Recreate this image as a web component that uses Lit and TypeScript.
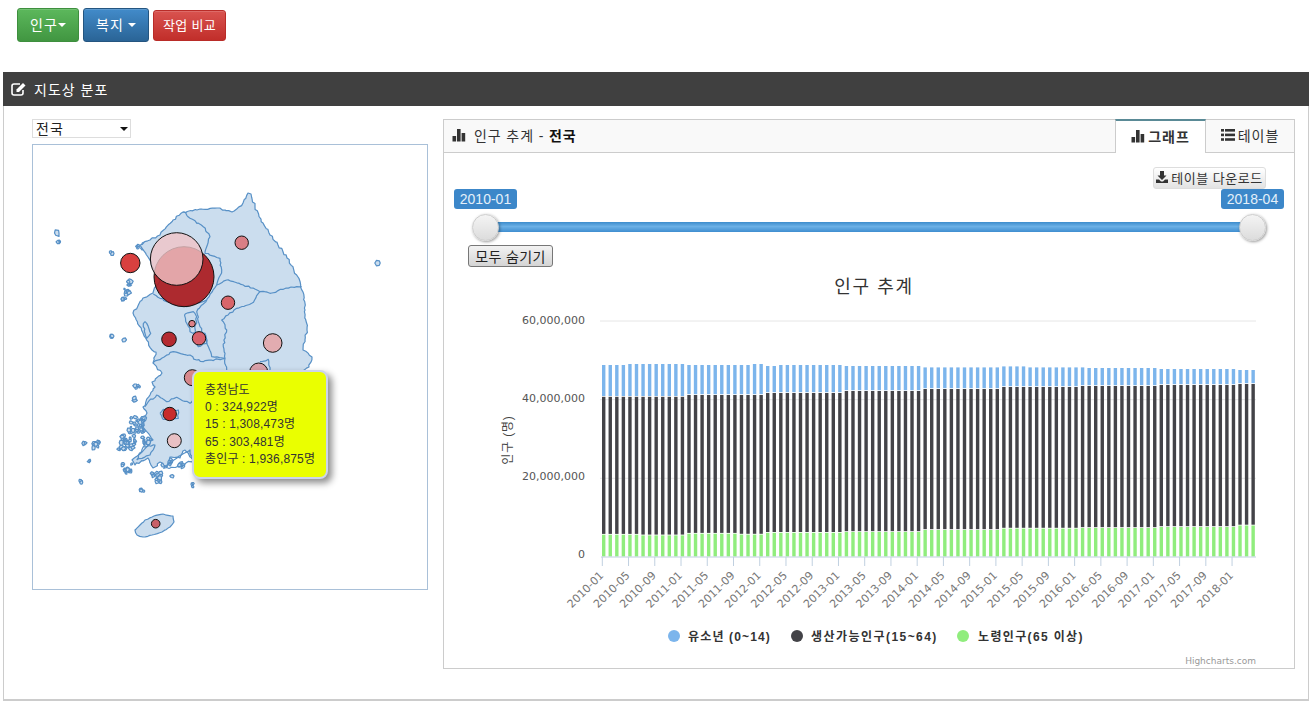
import { LitElement, html, css, svg } from "lit";
import { customElement } from "lit/decorators.js";

type P = [number, number];
let seed = 7;
const rnd = () => {
  seed = (seed * 16807) % 2147483647;
  return seed / 2147483647;
};
function rough(pts: P[], amp: number, close = false): string {
  const list = close ? [...pts, pts[0]] : pts;
  let d = `M${list[0][0].toFixed(1)} ${list[0][1].toFixed(1)}`;
  for (let i = 1; i < list.length; i++) {
    const [ax, ay] = list[i - 1];
    const [bx, by] = list[i];
    const n = Math.max(1, Math.round(Math.hypot(bx - ax, by - ay) / 2.6));
    for (let k = 1; k <= n; k++) {
      const t = k / n;
      const j = k === n ? 0 : amp;
      d += `L${(ax + (bx - ax) * t + (rnd() - 0.5) * j).toFixed(1)} ${(ay + (by - ay) * t + (rnd() - 0.5) * j).toFixed(1)}`;
    }
  }
  return d + (close ? "Z" : "");
}
const z2 = (a: number[][]): P[] => a.map(([x, y]) => [30 + x / 3, 170 + y / 3]);
const z3 = (a: number[][]): P[] => a.map(([x, y]) => [30 + x / 3, 360 + y / 3]);

const mainland: P[] = [
  [248, 193], [251, 194], [255, 207], [263, 223], [270, 235], [278, 245], [287, 258], [298, 277], [303, 292], [305, 310],
  [307, 330], [303, 350], [312, 357], [309, 367], [300, 372], [298, 400], [290, 430], [270, 452], [240, 465],
  [215, 460], [195, 462], [185, 450], [180, 458], [170, 457], [167, 467], [160, 462], [153, 468], [148, 458], [135, 465],
  [132, 460], [142, 452], [150, 444], [153, 440], [143, 427], [147, 413], [143, 407], [150, 395], [155, 387], [152, 382],
  [162, 373], [153, 363], [156, 352], [152, 350], [143, 333], [133, 313], [143, 298], [153, 293], [160, 280], [155, 273],
  [148, 257], [140, 245], [150, 240], [160, 235], [173, 220], [183, 212], [200, 209], [217, 208], [232, 212], [243, 203],
];
const borders: P[][] = [
  z2([[460, 125], [480, 145], [520, 170], [540, 200], [530, 230], [525, 250], [570, 265], [575, 300], [560, 345]]),
  z2([[560, 345], [590, 330], [640, 345], [690, 365], [720, 370], [760, 358], [800, 350], [815, 350]]),
  z2([[690, 365], [665, 400], [620, 415], [575, 450], [590, 480], [580, 530], [585, 565], [590, 600]]),
  z2([[370, 372], [410, 395], [470, 410], [530, 390], [560, 345]]),
  z2([[530, 390], [500, 425], [510, 470], [530, 510], [545, 560], [585, 565]]),
  z2([[465, 432], [490, 425], [500, 440], [495, 490], [480, 485], [470, 460], [465, 432]]),
  z2([[490, 490], [525, 490], [530, 520], [505, 530], [490, 510], [490, 490]]),
  z2([[370, 578], [395, 565], [430, 545], [480, 555], [500, 570], [520, 575], [585, 565]]),
  z2([[345, 455], [362, 490], [350, 505], [340, 470], [345, 455]]),
  z3([[345, 140], [355, 125], [380, 105], [410, 125], [440, 112], [480, 130], [490, 120]]),
  z3([[390, 160], [400, 148], [445, 150], [445, 175], [400, 178], [390, 160]]),
  z3([[320, 300], [360, 285], [375, 255], [340, 260], [320, 300]]),
  z3([[400, 325], [440, 295], [480, 270], [490, 300], [450, 320], [400, 325]]),
  z2([[690, 575], [715, 568], [720, 600]]),
];
const jeju: P[] = [[135, 530], [140, 525], [145, 520], [154, 516], [163, 514], [173, 516], [174, 522], [170, 527], [162, 532], [152, 535], [143, 537], [137, 535]];
const blobs: [number, number, number, number][] = [
  [57, 233, 3.4, 1], [59, 241, 1.5, 2], [111, 253, 1.3, 2], [378, 263, 3.5, 1], [140, 247, 4, 5], [130, 283, 2.5, 6], [127, 291, 2.5, 8],
  [124, 300, 1.5, 4], [137, 425, 8, 34], [128, 442, 7, 28], [148, 443, 6, 18], [127, 468, 5, 14], [157, 477, 5, 14], [167, 463, 4, 10],
  [96, 445, 3, 8], [84, 443, 1.5, 2], [89, 461, 1.5, 3], [80, 482, 1.5, 2], [142, 490, 2, 3], [172, 476, 2, 1], [193, 485, 2, 3], [180, 465, 3, 6], [118, 448, 2, 2],
  [137, 385, 3, 4], [111, 336, 1, 2], [125, 340, 1.5, 2], [132, 398, 3, 3],
];
function tiny(cx: number, cy: number, r: number): string {
  const n = 6;
  const pts: P[] = [];
  for (let i = 0; i < n; i++) {
    const a = (i / n) * Math.PI * 2;
    const q = r * (0.6 + rnd() * 0.6);
    pts.push([cx + Math.cos(a) * q, cy + Math.sin(a) * q]);
  }
  return "M" + pts.map((p) => p[0].toFixed(1) + " " + p[1].toFixed(1)).join("L") + "Z";
}
const islandPaths: string[] = [];
for (const [x, y, spread, n] of blobs) {
  for (let i = 0; i < n; i++) {
    const dx = n === 1 ? 0 : (rnd() - 0.5) * spread * 2;
    const dy = n === 1 ? 0 : (rnd() - 0.5) * spread * 2;
    islandPaths.push(tiny(x + dx, y + dy, n === 1 ? spread : 0.8 + rnd() * 1.8));
  }
}
const mainD = rough(mainland, 2, true);
const jejuD = rough(jeju, 0.8, true);
const borderDs = borders.map((b) => rough(b, 1.8));

const bubbles = [
  { x: 184, y: 276.7, r: 30, f: "rgba(170,28,32,.93)" },
  { x: 176.7, y: 259, r: 26.3, f: "rgba(240,196,199,.8)" },
  { x: 130.3, y: 263, r: 9.7, f: "#d9403f" },
  { x: 241.7, y: 242.7, r: 6.7, f: "#d97f86" },
  { x: 228, y: 302.7, r: 6.7, f: "#d8656a" },
  { x: 192, y: 323.7, r: 3.3, f: "#de8086" },
  { x: 199, y: 338.3, r: 6.7, f: "#d8606a" },
  { x: 169, y: 339.3, r: 7.3, f: "#b42a30" },
  { x: 272.7, y: 343, r: 9.3, f: "#e2acb0" },
  { x: 258.7, y: 372, r: 9, f: "#d9a0a8" },
  { x: 192.3, y: 377.7, r: 8, f: "#d8888c" },
  { x: 169.7, y: 414, r: 6.7, f: "#c82c2c" },
  { x: 174.3, y: 440.7, r: 7, f: "#e8c0c4" },
  { x: 155.7, y: 523.7, r: 4.3, f: "#c86068" },
];

const step = (i: number, t: [number, number][]) => {
  let v = t[0][1];
  for (const [s, y] of t) if (i >= s) v = y;
  return v;
};
const blueT: [number, number][] = [[0, 365], [4, 364], [13, 365], [23, 364], [25, 366], [27, 365], [37, 366], [49, 367.4], [61, 366.4], [65, 367.4], [74, 368], [85, 369], [97, 370]];
const blackT: [number, number][] = [[0, 396.8], [13, 395], [25, 393], [37, 391], [49, 389], [61, 387], [73, 386], [85, 385], [97, 384]];
const greenT: [number, number][] = [[0, 534.7], [6, 535.4], [13, 533.7], [21, 534.6], [25, 532.8], [37, 532], [49, 530], [61, 528.6], [73, 528], [85, 527], [97, 525.5]];

const labels: string[] = [];
for (let i = 0; i < 25; i++) {
  const m = i * 4;
  labels.push(`${2010 + Math.floor(m / 12)}-${String((m % 12) + 1).padStart(2, "0")}`);
}

const iconBars = html`<svg class="ico" viewBox="0 0 14 14" width="14" height="14"><rect x="0.5" y="8" width="3.6" height="5.5"/><rect x="5" y="1" width="3.6" height="12.5"/><rect x="9.6" y="5" width="3.6" height="8.5"/></svg>`;

@customElement("app-root")
export class AppRoot extends LitElement {
  static styles = css`
    :host { display: block; font-family: "Liberation Sans", "Noto Sans CJK KR", sans-serif; color: #333; font-size: 14px; background: #fff; }
    * { box-sizing: border-box; }
    .top { display: flex; align-items: center; gap: 4px; height: 34px; margin: 8px 0 30px 17px; }
    .btn { display: inline-flex; align-items: center; justify-content: center; color: #fff; border-radius: 3px; border: 1px solid; font-size: 14px; letter-spacing: 1px; box-shadow: inset 0 1px 0 rgba(255,255,255,.15); white-space: nowrap; padding-bottom: 2px; }
    .green { width: 62px; height: 34px; background: linear-gradient(#5cb85c, #419641); border-color: #3e8f3e; }
    .blue { width: 66px; height: 34px; background: linear-gradient(#428bca, #2a6496); border-color: #245580; }
    .red { width: 73px; height: 31px; font-size: 13px; background: linear-gradient(#d9534f, #c12e2a); border-color: #b92c28; letter-spacing: .3px; }
    .caret { display: inline-block; width: 0; height: 0; border-left: 4px solid transparent; border-right: 4px solid transparent; border-top: 4px solid #fff; margin-top: 2px; }
    .blue .caret { margin-left: 4px; }
    .panel { margin-left: 3px; width: 1306px; }
    .phead { height: 34px; background: #404040; color: #fff; display: flex; align-items: center; padding: 0 0 1px 8px; gap: 7px; font-size: 14px; letter-spacing: 1px; }
    .pbody { display: flex; height: 595px; border: 1px solid #ccc; border-top: 0; border-bottom-width: 2px; padding: 13px 0 0 28px; gap: 15px; align-items: flex-start; }
    .left { width: 396px; }
    .sel { position: relative; width: 99px; height: 19px; }
    select { appearance: none; width: 100%; height: 100%; border: 1px solid #ddd; background: #fff; padding: 0 0 0 3px; font: 14px "Liberation Sans", "Noto Sans CJK KR", sans-serif; letter-spacing: 1px; color: #222; border-radius: 0; }
    .arrow { position: absolute; right: 3px; top: 8px; width: 0; height: 0; border-left: 4px solid transparent; border-right: 4px solid transparent; border-top: 4px solid #111; pointer-events: none; }
    .map { position: relative; margin-top: 6px; height: 446px; border: 1px solid #a9c0d8; }
    .map svg { display: block; }
    .tip { position: absolute; left: 159px; top: 225px; width: 136px; height: 109px; background: #eaff00; border: 2px solid #ccd4ec; border-radius: 8px; box-shadow: 4px 4px 7px rgba(0,0,0,.45); padding: 10px 0 0 11px; font-size: 12px; line-height: 17.2px; letter-spacing: .16px; color: #333; white-space: nowrap; }
    .chart { width: 852px; height: 550px; border: 1px solid #ccc; }
    .chead { display: flex; justify-content: space-between; height: 33px; background: #f9f9f9; border-bottom: 1px solid #ccc; }
    .ctitle { display: flex; align-items: center; padding: 0 0 2px 8px; gap: 8px; font-size: 14px; letter-spacing: .9px; }
    .ctitle b { color: #111; }
    .ico { fill: #333; flex: none; }
    .tabs { display: flex; }
    .tab { display: flex; align-items: center; justify-content: center; gap: 3px; font-size: 14px; letter-spacing: 1px; padding-bottom: 2px; }
    .tab.on { width: 91px; height: 34px; background: #fff; border-left: 1px solid #ccc; border-right: 1px solid #ccc; border-top: 2px solid #5a8a96; font-weight: bold; margin-top: -1px; position: relative; }
    .tab.off { width: 88px; }
    .dlrow { display: flex; justify-content: flex-end; padding: 14px 28px 0 0; }
    .dl { display: flex; align-items: center; justify-content: center; gap: 3px; width: 113px; height: 22px; border: 1px solid #ddd; border-radius: 3px; background: linear-gradient(#fff, #e2e2e2); font-size: 13px; letter-spacing: .55px; color: #333; padding-bottom: 2px; }
    .slider { position: relative; height: 56px; padding: 33px 0 0 41px; }
    .track { width: 768px; height: 10px; background: linear-gradient(#3c8ccc, #6bb0e6 45%, #3f8ed0); }
    .handle { position: absolute; top: 25px; width: 27px; height: 27px; border-radius: 50%; background: linear-gradient(#f4f4f4, #dcdcdc); border: 1px solid #ccc; box-shadow: 1px 1px 3px rgba(0,0,0,.4); }
    .val { position: absolute; top: 0; width: 63px; height: 20px; background: #3c87c9; color: #e4f0fa; border-radius: 3px; font-size: 14px; line-height: 20px; text-align: center; }
    .hide { display: block; margin: 0 0 1px 24px; width: 85px; height: 22px; border: 1px solid #777; border-radius: 3px; background: linear-gradient(#f2f2f2, #d4d4d4); font: 14px "Liberation Sans", "Noto Sans CJK KR", sans-serif; letter-spacing: .4px; color: #222; padding: 0 0 2px; }
    .cs { display: block; }
    .t { font-family: "Liberation Sans", "Noto Sans CJK KR", sans-serif; }
    .dj { font-family: "DejaVu Sans", sans-serif; }
    .ctt { font-size: 18px; fill: #333; letter-spacing: 1.7px; }
    .yl { font-size: 11px; fill: #555; }
    .xl { font-size: 11px; fill: #777; }
    .yt { font-size: 12px; fill: #444; letter-spacing: .8px; }
    .lg { font-size: 12px; font-weight: bold; fill: #333; }
    .l1 { letter-spacing: 1.15px; }
    .l2 { letter-spacing: 1.45px; }
    .l3 { letter-spacing: 1.35px; }
    .hc { font-size: 9px; fill: #999; }
  `;

  private chart() {
    const bars = [];
    for (let i = 0; i < 100; i++) {
      const x = 602 + i * 6.56;
      const bl = step(i, blueT), bk = step(i, blackT), gr = step(i, greenT);
      bars.push(svg`<rect x=${x} y=${bl} width="3.4" height=${bk - bl - 0.8} fill="#7cb5ec"/>
        <rect x=${x} y=${bk} width="3.4" height=${gr - bk - 0.8} fill="#434348"/>
        <rect x=${x} y=${gr} width="3.4" height=${556.5 - gr} fill="#90ed7d"/>`);
    }
    return html`<svg class="cs" width="850" height="400" viewBox="444 268 850 400">
      <text class="t ctt" x="874" y="293" text-anchor="middle">인구 추계</text>
      ${[321, 399.7, 478.3].map((y) => svg`<line x1="600" x2="1256" y1=${y} y2=${y} stroke="#e6e6e6"/>`)}
      ${[["60,000,000", 324], ["40,000,000", 402], ["20,000,000", 480], ["0", 558]].map(([t, y]) => svg`<text class="dj yl" x="585" y=${y} text-anchor="end">${t}</text>`)}
      <text class="t yt" transform="translate(512 440) rotate(-90)" text-anchor="middle">인구 (명)</text>
      ${bars}
      <line x1="601" x2="1256" y1="557" y2="557" stroke="#c0d0e0"/>
      ${labels.map((l, i) => {
        const x = 602.3 + i * 26.24;
        return svg`<line x1=${x} x2=${x} y1="557" y2="566" stroke="#c0d0e0"/>
          <text class="dj xl" transform="translate(${x + 2} 576) rotate(-45)" text-anchor="end">${l}</text>`;
      })}
      <circle cx="674" cy="636" r="6" fill="#7cb5ec"/>
      <text class="t lg l1" x="688" y="641">유소년 (0~14)</text>
      <circle cx="797" cy="636" r="6" fill="#434348"/>
      <text class="t lg l2" x="811" y="641">생산가능인구(15~64)</text>
      <circle cx="963" cy="636" r="6" fill="#90ed7d"/>
      <text class="t lg l3" x="978" y="641">노령인구(65 이상)</text>
      <text class="dj hc" x="1256" y="664" text-anchor="end">Highcharts.com</text>
    </svg>`;
  }

  private map() {
    return html`<svg width="394" height="444" viewBox="33 145 394 444">
      <g fill="#cbddee" stroke="#5790c6" stroke-width="1.2" stroke-linejoin="round">
        ${islandPaths.map((d) => svg`<path d=${d}/>`)}
        <path d=${mainD}/>
        <path d=${jejuD}/>
      </g>
      <g fill="none" stroke="#5790c6" stroke-width="1.2" stroke-linejoin="round">
        ${borderDs.map((d) => svg`<path d=${d}/>`)}
      </g>
      <g stroke="#111" stroke-width="1">
        ${bubbles.map((b) => svg`<circle cx=${b.x} cy=${b.y} r=${b.r} fill=${b.f}/>`)}
      </g>
    </svg>`;
  }

  render() {
    return html`
      <div class="top">
        <div class="btn green">인구<span class="caret"></span></div>
        <div class="btn blue">복지<span class="caret"></span></div>
        <div class="btn red">작업 비교</div>
      </div>
      <section class="panel">
        <div class="phead">
          <svg width="16" height="14" viewBox="0 0 16 14" fill="none" stroke="#fff"><path d="M12 8v3a2 2 0 0 1-2 2H3a2 2 0 0 1-2-2V4a2 2 0 0 1 2-2h6" stroke-width="1.6"/><path d="M5.5 7.5 12 1l2.5 2.5L8 10H5.5z" fill="#fff" stroke="none"/></svg>
          <span>지도상 분포</span>
        </div>
        <div class="pbody">
          <div class="left">
            <div class="sel"><select><option>전국</option></select><span class="arrow"></span></div>
            <div class="map">
              ${this.map()}
              <div class="tip">충청남도<br />0 : 324,922명<br />15 : 1,308,473명<br />65 : 303,481명<br />총인구 : 1,936,875명</div>
            </div>
          </div>
          <div class="chart">
            <div class="chead">
              <div class="ctitle">${iconBars}<span>인구 추계 - <b>전국</b></span></div>
              <div class="tabs">
                <div class="tab on">${iconBars}<span>그래프</span></div>
                <div class="tab off">
                  <svg class="ico" viewBox="0 0 14 12" width="14" height="12"><rect x="0" y="0" width="3" height="2.6"/><rect x="4" y="0" width="10" height="2.6"/><rect x="0" y="4.6" width="3" height="2.6"/><rect x="4" y="4.6" width="10" height="2.6"/><rect x="0" y="9.2" width="3" height="2.6"/><rect x="4" y="9.2" width="10" height="2.6"/></svg>
                  <span>테이블</span>
                </div>
              </div>
            </div>
            <div class="dlrow">
              <div class="dl">
                <svg class="ico" viewBox="0 0 12 12" width="12" height="12"><path d="M4 0h4v4.5h2.5L6 9 1.5 4.5H4z"/><path d="M0 8.5h3L5 10.5h2L9 8.5h3V12H0z"/></svg>
                <span>테이블 다운로드</span>
              </div>
            </div>
            <div class="slider">
              <div class="track"></div>
              <span class="val" style="left:10px">2010-01</span>
              <span class="val" style="left:777px">2018-04</span>
              <span class="handle" style="left:28px"></span>
              <span class="handle" style="left:795px"></span>
            </div>
            <button class="hide">모두 숨기기</button>
            ${this.chart()}
          </div>
        </div>
      </section>
    `;
  }
}
